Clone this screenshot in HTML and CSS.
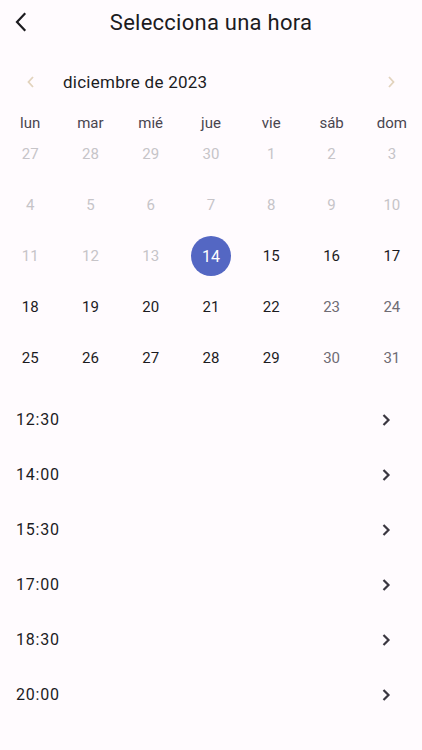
FILE: index.html
```html
<!DOCTYPE html>
<html lang="es">
<head>
  <meta charset="UTF-8">
  <meta name="viewport" content="width=device-width, initial-scale=1">
  <title>Selecciona una hora</title>
  <link rel="stylesheet" href="styles.css">
</head>
<body>
  <header class="top-bar">
    <button class="back-btn" aria-label="Volver">
      <svg width="24" height="24" viewBox="0 0 24 24"><path d="M14.5 4 L7 12 L14.5 20" fill="none" stroke="#1c1b1f" stroke-width="2.2" stroke-linecap="square"/></svg>
    </button>
    <h1 class="title">Selecciona una hora</h1>
  </header>

  <div class="month-row">
    <span class="month-nav">
      <svg width="12" height="14" viewBox="0 0 12 14"><path d="M8 2 L3.5 7 L8 12" fill="none" stroke="#e2d3bd" stroke-width="1.8"/></svg>
    </span>
    <span class="month-label">diciembre de 2023</span>
    <span class="month-nav next">
      <svg width="12" height="14" viewBox="0 0 12 14"><path d="M4 2 L8.5 7 L4 12" fill="none" stroke="#e2d3bd" stroke-width="1.8"/></svg>
    </span>
  </div>

  <div class="weekdays">
    <span>lun</span><span>mar</span><span>mié</span><span>jue</span><span>vie</span><span>sáb</span><span>dom</span>
  </div>

  <div class="days" id="days"></div>

  <ul class="times" id="times"></ul>

  <script>
    const daysEl = document.getElementById('days');
    const timesEl = document.getElementById('times');

    // semana 1: noviembre + primeros de diciembre
    const days = [27, 28, 29, 30, 1, 2, 3];
    for (let d = 4; d <= 31; d++) days.push(d);

    days.forEach((d, i) => {
      const cell = document.createElement('div');
      cell.className = 'day';
      if (i < 17) cell.classList.add('disabled');
      else if (i === 17) cell.classList.add('selected');
      else if (i > 20 && i % 7 >= 5) cell.classList.add('weekend');
      cell.innerHTML = `<span>${d}</span>`;
      daysEl.appendChild(cell);
    });

    const times = ['12:30', '14:00', '15:30', '17:00', '18:30', '20:00'];
    times.forEach(t => {
      const li = document.createElement('li');
      li.className = 'time-row';
      li.innerHTML = `<span class="time">${t}</span>
        <svg width="24" height="24" viewBox="0 0 24 24"><path d="M9.5 7 L14.5 12 L9.5 17" fill="none" stroke="#3a3740" stroke-width="2.2"/></svg>`;
      timesEl.appendChild(li);
    });
  </script>
</body>
</html>
```

FILE: styles.css
```css
html, body {
  margin: 0;
  padding: 0;
}

body {
  font-family: Roboto, "Noto Sans", sans-serif;
  background: #fffbfe;
  color: #1c1b1f;
  width: 422px;
}

.top-bar {
  height: 44px;
  display: flex;
  align-items: center;
  justify-content: center;
  position: relative;
}

.back-btn {
  position: absolute;
  left: 10px;
  top: 10px;
  width: 24px;
  height: 24px;
  padding: 0;
  border: none;
  background: none;
}

.title {
  margin: 0;
  font-size: 22px;
  font-weight: 400;
  letter-spacing: 0.25px;
}

.month-row {
  margin-top: 16px;
  height: 44px;
  display: flex;
  align-items: center;
  padding: 0 25px;
}

.month-nav {
  width: 12px;
  height: 14px;
  display: flex;
}

.month-nav.next {
  margin-left: auto;
}

.month-label {
  margin-left: 26px;
  font-size: 17px;
  letter-spacing: 0.25px;
}

.weekdays {
  margin-top: 8px;
  height: 22px;
  display: grid;
  grid-template-columns: repeat(7, 1fr);
  align-items: center;
  font-size: 15px;
  color: #49454f;
}

.weekdays span {
  text-align: center;
}

.days {
  display: grid;
  grid-template-columns: repeat(7, 1fr);
  grid-auto-rows: 40px;
  row-gap: 11px;
}

.day {
  display: flex;
  align-items: center;
  justify-content: center;
  font-size: 15px;
  color: #1c1b1f;
}

.day span {
  width: 40px;
  height: 40px;
  border-radius: 50%;
  display: flex;
  align-items: center;
  justify-content: center;
}

.day.disabled {
  color: #c6c4c8;
}

.day.weekend {
  color: #6f6c74;
}

.day.selected span {
  background: #5467c3;
  color: #fff;
  font-size: 16px;
}

.times {
  list-style: none;
  margin: 14px 0 0;
  padding: 0;
}

.time-row {
  height: 55px;
  display: flex;
  align-items: center;
  justify-content: space-between;
  padding: 0 24px 0 16px;
}

.time {
  font-size: 16px;
  letter-spacing: 0.8px;
}
```
